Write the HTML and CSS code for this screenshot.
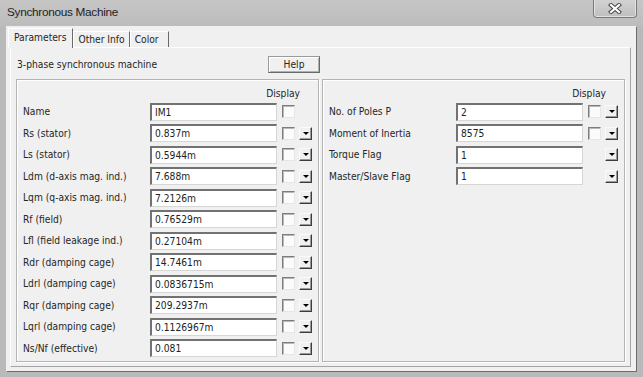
FILE: index.html
```html
<!doctype html>
<html lang="en">
	<head>
		<meta charset="UTF-8">
		<title>Synchronous Machine</title>
		<link rel="stylesheet" href="styles.css">
	</head>
	<body>
		<div class="window">
			<div class="titlebar">
				<span class="title">Synchronous Machine</span>
				<div class="close">
					<svg width="14" height="11" viewBox="0 0 14 11">
						<path d="M3 2 L11 9 M11 2 L3 9" stroke="#4a4a4a" stroke-width="4.2" stroke-linecap="square"/>
						<path d="M3 2 L11 9 M11 2 L3 9" stroke="#fff" stroke-width="2.2" stroke-linecap="square"/>
					</svg>
				</div>
			</div>
			<div class="frame">
				<div class="dialog">
					<div class="tabs">
						<div class="tab active">Parameters</div>
						<div class="tab">Other Info</div>
						<div class="tab color">Color</div>
					</div>
					<div class="tabpage">
						<div class="top">
							<span>3-phase synchronous machine</span>
							<div class="btn">Help</div>
						</div>
						<div class="panels">
							<div class="panel">
								<div class="disp">Display</div>
								<div class="row"><span class="lbl">Name</span><div class="field">IM1</div><span class="chk"></span><span class="dd none"></span></div>
								<div class="row"><span class="lbl">Rs (stator)</span><div class="field">0.837m</div><span class="chk"></span><span class="dd"></span></div>
								<div class="row"><span class="lbl">Ls (stator)</span><div class="field">0.5944m</div><span class="chk"></span><span class="dd"></span></div>
								<div class="row"><span class="lbl">Ldm (d-axis mag. ind.)</span><div class="field">7.688m</div><span class="chk"></span><span class="dd"></span></div>
								<div class="row"><span class="lbl">Lqm (q-axis mag. ind.)</span><div class="field">7.2126m</div><span class="chk"></span><span class="dd"></span></div>
								<div class="row"><span class="lbl">Rf (field)</span><div class="field">0.76529m</div><span class="chk"></span><span class="dd"></span></div>
								<div class="row"><span class="lbl">Lfl (field leakage ind.)</span><div class="field">0.27104m</div><span class="chk"></span><span class="dd"></span></div>
								<div class="row"><span class="lbl">Rdr (damping cage)</span><div class="field">14.7461m</div><span class="chk"></span><span class="dd"></span></div>
								<div class="row"><span class="lbl">Ldrl (damping cage)</span><div class="field">0.0836715m</div><span class="chk"></span><span class="dd"></span></div>
								<div class="row"><span class="lbl">Rqr (damping cage)</span><div class="field">209.2937m</div><span class="chk"></span><span class="dd"></span></div>
								<div class="row"><span class="lbl">Lqrl (damping cage)</span><div class="field">0.1126967m</div><span class="chk"></span><span class="dd"></span></div>
								<div class="row"><span class="lbl">Ns/Nf (effective)</span><div class="field">0.081</div><span class="chk"></span><span class="dd"></span></div>
							</div>
							<div class="panel">
								<div class="disp">Display</div>
								<div class="row"><span class="lbl">No. of Poles P</span><div class="field">2</div><span class="chk"></span><span class="dd"></span></div>
								<div class="row"><span class="lbl">Moment of Inertia</span><div class="field">8575</div><span class="chk"></span><span class="dd"></span></div>
								<div class="row"><span class="lbl">Torque Flag</span><div class="field">1</div><span class="chk none"></span><span class="dd"></span></div>
								<div class="row"><span class="lbl">Master/Slave Flag</span><div class="field">1</div><span class="chk none"></span><span class="dd"></span></div>
							</div>
						</div>
					</div>
				</div>
			</div>
		</div>
	</body>
</html>
```

FILE: styles.css
```css
*{margin:0;padding:0;box-sizing:border-box;}
body{
	width:643px;height:377px;
	overflow:hidden;
	background:#b9b9b9;
	font-family:"DejaVu Sans Condensed","DejaVu Sans",sans-serif;
	font-stretch:condensed;
	font-size:10.2px;
	color:#262626;
}
.window{
	height:377px;
	display:flex;
	flex-direction:column;
}
.titlebar{
	height:26px;
	display:flex;
	align-items:flex-start;
	padding:0 6px 0 7px;
	background:linear-gradient(#c6c6c6,#bcbcbc);
}
.title{
	font-family:"Liberation Sans",sans-serif;
	font-size:11.8px;
	letter-spacing:-0.3px;
	line-height:24px;
	color:#1e1e1e;
}
.close{
	margin-left:auto;
	width:44px;height:18px;
	border:1px solid #7a7a7a;
	border-top:0;
	border-radius:0 0 4px 4px;
	background:linear-gradient(#d2d2d2,#bfbfbf);
	box-shadow:inset 0 -1px 0 #e2e2e2,inset 1px 0 0 #e2e2e2,inset -1px 0 0 #e2e2e2;
	display:flex;
	align-items:center;
	justify-content:center;
}
.frame{
	flex:1;
	display:flex;
	padding:0 7px 6px 6px;
}
.dialog{
	flex:1;
	display:flex;
	flex-direction:column;
	background:#f0f0f0;
	padding:2px 5px 4px 4px;
	box-shadow:1px 1px 0 #6c6c6c;
}
.tabs{
	height:19px;
	display:flex;
	align-items:flex-end;
}
.tab{
	height:16px;
	padding:0 4px;
	line-height:15px;
	border-top:1px solid #fff;
	border-left:1px solid #fff;
	border-right:1px solid #6a6a6a;
	background:#f0f0f0;
}
.tab.color{
	padding:0 9px 0 4px;
}
.tab.active{
	height:20px;
	margin:0 0 -1px -2px;
	padding:0 6px 0 5px;
	line-height:17px;
	position:relative;
	z-index:1;
}
.tabpage{
	flex:1;
	border:1px solid;
	border-color:#fff #a5a5a5 #a5a5a5 #fff;
	padding:8px 5px 0 5px;
}
.top{
	width:304px;height:17px;
	display:flex;
	align-items:center;
	justify-content:space-between;
	padding-left:1px;
}
.btn{
	width:52px;height:17px;
	border:1px solid #6a6a6a;
	border-top-color:#9a9a9a;
	border-left-color:#9a9a9a;
	box-shadow:inset 1px 1px 0 #fff,inset -1px -1px 0 #b0b0b0;
	text-align:center;
	line-height:15px;
}
.panels{
	margin-top:6px;
	height:283px;
	display:grid;
	grid-template-columns:303px 303px;
	column-gap:3px;
}
.panel{
	border:1px solid #b4b4b4;
	box-shadow:inset 1px 1px 0 #fff,1px 1px 0 #fff;
	padding:7px 0 0 6px;
}
.disp{
	width:277px;height:14px;
	text-align:right;
	line-height:14px;
}
.row{
	height:21.5px;
	display:flex;
	align-items:center;
}
.lbl{
	width:127px;
}
.field{
	width:127px;height:18px;
	background:#fff;
	border-style:solid;
	border-width:2px 1px 1px 2px;
	border-color:#727272 #d6d6d6 #d6d6d6 #727272;
	padding-left:3px;
	line-height:15px;
	color:#222;
}
.chk{
	width:13px;height:13px;
	margin-left:5px;
	background:#fbfbfb;
	border:1px solid;
	border-color:#7d7d7d #e6e6e6 #e6e6e6 #7d7d7d;
	box-shadow:inset 1px 1px 0 #b8b8b8;
}
.dd{
	width:13px;height:13px;
	margin-left:4px;
	border:1px solid;
	border-color:#fafafa #3c3c3c #3c3c3c #fafafa;
	box-shadow:inset -1px -1px 0 #9a9a9a;
	background:#f0f0f0;
	display:flex;
	justify-content:center;
	padding-top:4px;
}
.dd::after{
	content:"";
	width:0;height:0;
	border-left:3px solid transparent;
	border-right:3px solid transparent;
	border-top:3px solid #000;
}
.none{
	visibility:hidden;
}
```
